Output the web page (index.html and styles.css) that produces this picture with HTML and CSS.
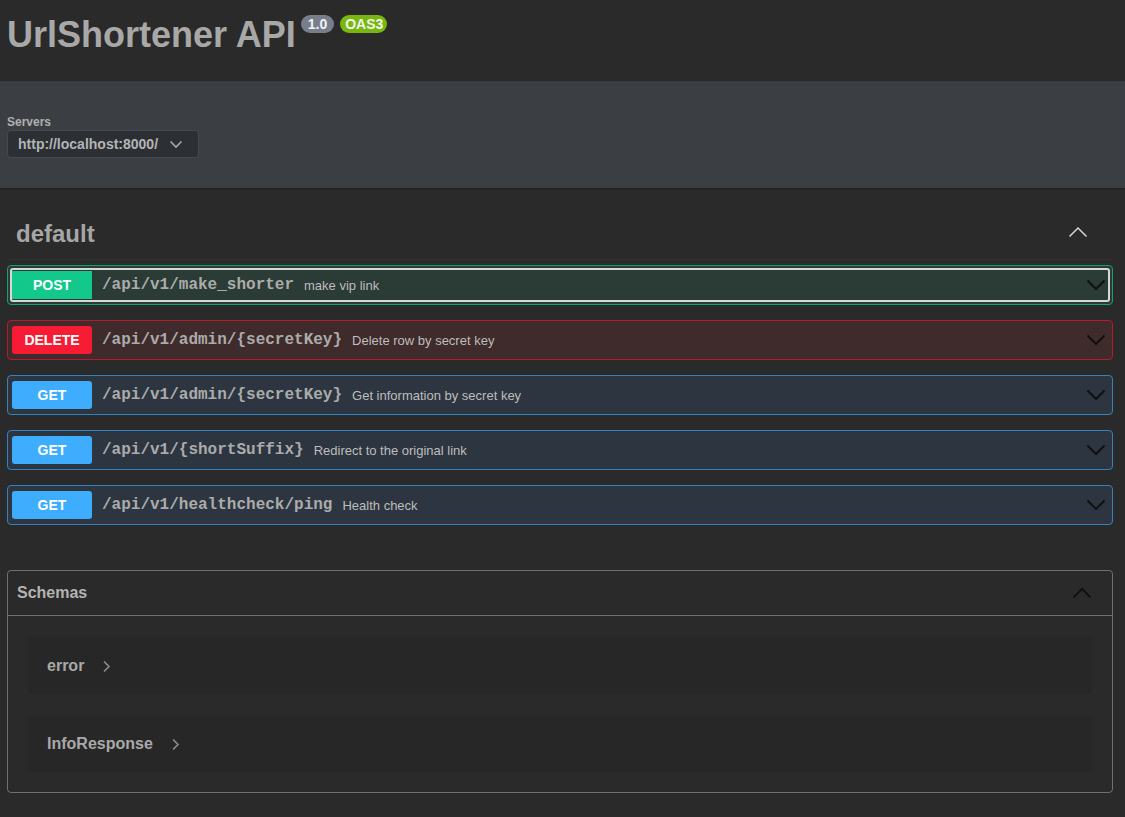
FILE: index.html
```html
<!DOCTYPE html>
<html lang="en">
<head>
<meta charset="utf-8">
<title>UrlShortener API</title>
<link rel="stylesheet" href="styles.css">
</head>
<body>
<header class="info">
  <h1 class="title">UrlShortener API</h1>
  <span class="badge badge-version">1.0</span>
  <span class="badge badge-oas">OAS3</span>
</header>

<section class="servers">
  <div class="servers-label">Servers</div>
  <div class="server-select">
    <span>http://localhost:8000/</span>
    <svg class="select-chev" width="14" height="9" viewBox="0 0 14 9"><path d="M1.5 1.5 L7 7 L12.5 1.5" fill="none" stroke="#a8a8a8" stroke-width="1.6"/></svg>
  </div>
</section>

<main class="wrapper">
  <div class="tag-header">
    <h3 class="tag-name">default</h3>
    <svg class="tag-chev" width="20" height="12" viewBox="0 0 20 12"><path d="M1.5 10.5 L10 2 L18.5 10.5" fill="none" stroke="#d4d4d4" stroke-width="1.5"/></svg>
  </div>

  <div class="opblock op-post">
    <div class="op-summary focused">
      <span class="method">POST</span>
      <span class="path">/api/v1/make_shorter</span>
      <span class="desc">make vip link</span>
      <svg class="op-chev" width="20" height="12" viewBox="0 0 20 12"><path d="M1.5 1.5 L10 10 L18.5 1.5" fill="none" stroke="#101010" stroke-width="2"/></svg>
    </div>
  </div>

  <div class="opblock op-delete">
    <div class="op-summary">
      <span class="method">DELETE</span>
      <span class="path">/api/v1/admin/{secretKey}</span>
      <span class="desc">Delete row by secret key</span>
      <svg class="op-chev" width="20" height="12" viewBox="0 0 20 12"><path d="M1.5 1.5 L10 10 L18.5 1.5" fill="none" stroke="#101010" stroke-width="2"/></svg>
    </div>
  </div>

  <div class="opblock op-get">
    <div class="op-summary">
      <span class="method">GET</span>
      <span class="path">/api/v1/admin/{secretKey}</span>
      <span class="desc">Get information by secret key</span>
      <svg class="op-chev" width="20" height="12" viewBox="0 0 20 12"><path d="M1.5 1.5 L10 10 L18.5 1.5" fill="none" stroke="#101010" stroke-width="2"/></svg>
    </div>
  </div>

  <div class="opblock op-get">
    <div class="op-summary">
      <span class="method">GET</span>
      <span class="path">/api/v1/{shortSuffix}</span>
      <span class="desc">Redirect to the original link</span>
      <svg class="op-chev" width="20" height="12" viewBox="0 0 20 12"><path d="M1.5 1.5 L10 10 L18.5 1.5" fill="none" stroke="#101010" stroke-width="2"/></svg>
    </div>
  </div>

  <div class="opblock op-get">
    <div class="op-summary">
      <span class="method">GET</span>
      <span class="path">/api/v1/healthcheck/ping</span>
      <span class="desc">Health check</span>
      <svg class="op-chev" width="20" height="12" viewBox="0 0 20 12"><path d="M1.5 1.5 L10 10 L18.5 1.5" fill="none" stroke="#101010" stroke-width="2"/></svg>
    </div>
  </div>

  <section class="models">
    <div class="models-header">
      <h4>Schemas</h4>
      <svg class="models-chev" width="20" height="12" viewBox="0 0 20 12"><path d="M1.5 10.5 L10 2 L18.5 10.5" fill="none" stroke="#0c0c0c" stroke-width="1.6"/></svg>
    </div>
    <div class="models-body">
      <div class="model-item">
        <span class="model-name">error</span>
        <svg class="model-chev" width="9" height="13" viewBox="0 0 9 13"><path d="M2 1.5 L7 6.5 L2 11.5" fill="none" stroke="#8c8c8c" stroke-width="1.6"/></svg>
      </div>
      <div class="model-item">
        <span class="model-name">InfoResponse</span>
        <svg class="model-chev" width="9" height="13" viewBox="0 0 9 13"><path d="M2 1.5 L7 6.5 L2 11.5" fill="none" stroke="#8c8c8c" stroke-width="1.6"/></svg>
      </div>
    </div>
  </section>
</main>
</body>
</html>
```

FILE: styles.css
```css
* { box-sizing: border-box; }

html, body {
  margin: 0;
  padding: 0;
  background: #2a2a2a;
  font-family: "Liberation Sans", Arial, sans-serif;
  color: #a9a9a9;
}

/* ---------- header ---------- */
.info {
  height: 81px;
  padding: 14px 7px 0;
  display: flex;
  align-items: flex-start;
}
.title {
  margin: 0;
  font-size: 36px;
  line-height: 41px;
  font-weight: bold;
  color: #a8a8a8;
}
.badge {
  margin-top: 1px;
  height: 18px;
  line-height: 18px;
  font-size: 14px;
  font-weight: bold;
  color: #f2f2f2;
  border-radius: 10px;
}
.badge-version {
  margin-left: 5px;
  padding: 0 7px;
  background: #777e8b;
}
.badge-oas {
  margin-left: 6px;
  padding: 0 4px 0 5px;
  background: #76b80c;
}

/* ---------- servers ---------- */
.servers {
  background: #3b3f43;
  padding: 34px 7px 30px;
  box-shadow: 0 1px 2px rgba(0, 0, 0, 0.25);
}
.servers-label {
  font-size: 12px;
  line-height: 14px;
  font-weight: bold;
  color: #b0b0b0;
  margin-bottom: 1px;
}
.server-select {
  width: 192px;
  height: 28px;
  background: #2c2f33;
  border: 1px solid #464a50;
  border-radius: 4px;
  display: flex;
  align-items: center;
  padding: 0 10px;
  font-size: 14px;
  font-weight: bold;
  color: #b4b4b4;
}
.select-chev { margin-left: 11px; }

/* ---------- operations ---------- */
.wrapper {
  padding: 20px 12px 0 7px;
}
.tag-header {
  display: flex;
  align-items: center;
  justify-content: space-between;
  border-bottom: 1px solid #2f2f2f;
  margin-bottom: 5px;
  padding: 12px 25px 11px 9px;
}
.tag-name {
  margin: 0;
  font-size: 24px;
  line-height: 28px;
  font-weight: bold;
  color: #a6a6a6;
}
.tag-chev { margin-top: -4px; }

.opblock {
  border: 1px solid;
  border-radius: 4px;
  margin-bottom: 15px;
}
.op-summary {
  display: flex;
  align-items: center;
  padding: 5px 5px 5px 4px;
  border-radius: 3px;
}
.op-summary.focused {
  outline: 2px solid #d7d7d7;
  outline-offset: -4px;
  border-radius: 5px;
}
.method {
  min-width: 80px;
  padding: 6px 0;
  font-size: 14px;
  line-height: 16px;
  font-weight: bold;
  color: #fff;
  text-align: center;
  border-radius: 3px;
}
.path {
  padding: 0 10px;
  font-family: "Liberation Mono", "Courier New", monospace;
  font-size: 16px;
  font-weight: bold;
  color: #ababab;
}
.desc {
  flex: 1;
  font-size: 13px;
  color: #bdbdbd;
}
.op-chev { flex: none; margin-right: 1px; }

.op-post { border-color: #17a070; background: #2b3b35; }
.op-post .method { background: #12c98b; }
.op-post .op-summary.focused .method { border-radius: 0; }

.op-delete { border-color: #b51b29; background: #3f2b2b; }
.op-delete .method { background: #f81b34; }

.op-get { border-color: #3581be; background: #2d3640; }
.op-get .method { background: #3eadfd; }

/* ---------- models ---------- */
.models {
  margin-top: 45px;
  border: 1px solid #707070;
  border-radius: 4px;
}
.models-header {
  display: flex;
  align-items: center;
  justify-content: space-between;
  padding: 10px 20px 10px 9px;
  border-bottom: 1px solid #707070;
}
.models-header h4 {
  margin: 0;
  font-size: 16px;
  line-height: 24px;
  font-weight: bold;
  color: #b3b3b3;
}
.models-body {
  display: flex;
  flex-direction: column;
  gap: 21px;
  padding: 21px 20px 20px;
}
.model-item {
  height: 57px;
  background: #272727;
  border-radius: 4px;
  display: flex;
  align-items: center;
  padding-left: 19px;
}
.model-name {
  font-size: 16px;
  font-weight: bold;
  color: #a9a9a9;
}
.model-chev { margin-left: 18px; margin-top: 1px; }
```
